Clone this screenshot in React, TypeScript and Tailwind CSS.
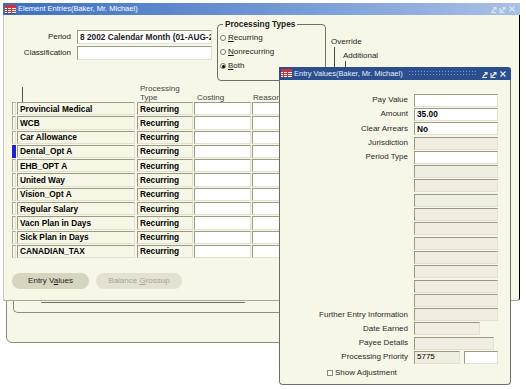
import React from "react";

const rows = [
  "Provincial Medical",
  "WCB",
  "Car Allowance",
  "Dental_Opt A",
  "EHB_OPT A",
  "United Way",
  "Vision_Opt A",
  "Regular Salary",
  "Vacn Plan in Days",
  "Sick Plan in Days",
  "CANADIAN_TAX",
];

const entryRows = [
  { label: "Pay Value", white: true },
  { label: "Amount", white: true, value: "35.00" },
  { label: "Clear Arrears", white: true, value: "No" },
  { label: "Jurisdiction" },
  { label: "Period Type", white: true },
  { label: "" },
  { label: "" },
  { label: "" },
  { label: "" },
  { label: "" },
  { label: "" },
  { label: "" },
  { label: "" },
  { label: "" },
  { label: "" },
  { label: "Further Entry Information" },
];

const FormIcon = () => (
  <svg width="11" height="9" viewBox="0 0 11 9" className="shrink-0">
    <rect width="11" height="9" fill="#fff" />
    <rect x="0" y="0" width="11" height="3" fill="#c9353a" />
    <rect x="0" y="4" width="11" height="1" fill="#c9353a" />
    <rect x="0" y="6" width="11" height="1" fill="#c9353a" />
    <rect x="2" y="3" width="1" height="6" fill="#c9353a" />
    <rect x="6" y="3" width="1" height="6" fill="#c9353a" />
    <rect x="0" y="8" width="11" height="1" fill="#3d4f86" />
  </svg>
);

const WinControls = ({ color }: { color: string }) => (
  <svg width="26" height="8" viewBox="0 0 26 8" fill="none" stroke={color} strokeWidth="1.1">
    <path d="M1 7.5h5M2 6.5l4-4M3.5 2.5h2.5v2.5" />
    <path d="M10 3v4.5h4.5M11 6.5l4-4M12.5 2.5h2.5v2.5" />
    <path d="M19.5 1.5l5 5M24.5 1.5l-5 5" />
  </svg>
);

const Field = ({
  className,
  white,
  children,
}: {
  className: string;
  white?: boolean;
  children?: React.ReactNode;
}) => (
  <div
    className={`${className} ${
      white ? "bg-white" : "bg-[#efeee0]"
    } border border-t-[#9b9a84] border-l-[#9b9a84] border-b-[#e2e1d0] border-r-[#e2e1d0] flex items-center px-[2px] overflow-hidden whitespace-nowrap`}
  >
    {children}
  </div>
);

const Radio = ({ checked, letter, rest }: { checked?: boolean; letter: string; rest: string }) => (
  <div className="flex items-center h-[14px] gap-[2px]">
    <span className="w-[6px] h-[6px] rounded-full border border-[#7a7a6c] bg-white flex items-center justify-center">
      {checked && <span className="w-[3px] h-[3px] rounded-full bg-black" />}
    </span>
    <span>
      <span className="underline">{letter}</span>
      {rest}
    </span>
  </div>
);

export default function App() {
  return (
    <div className="relative w-[526px] h-[389px] bg-white overflow-hidden font-['Liberation_Sans',Arial,sans-serif] text-[8px] text-[#1c1c1c] leading-none">
      {/* window behind */}
      <div className="absolute left-[6px] top-[270px] w-[470px] h-[73px] bg-[#f7f7e7] border border-[#8d8d7c] rounded-b-[6px]" />
      <div className="absolute left-[13px] top-[280px] w-[460px] h-[33px] border-l border-b border-[#8d8d7c] rounded-bl-[5px]" />
      <div className="absolute left-[41px] top-[302px] w-[204px] h-[1px] bg-[#6f6f62]" />

      {/* Element Entries window */}
      <div className="absolute left-[3px] top-[3px] w-[517px] h-[298px] flex flex-col">
        <div className="h-[12px] flex items-center gap-[2px] pl-[2px] pr-[4px] bg-gradient-to-r from-[#3c6fc2] via-[#6e95d3] to-[#a9c1e6] text-white text-[7.5px]">
          <FormIcon />
          <span className="flex-1">Element Entries(Baker, Mr. Michael)</span>
          <WinControls color="#dfe6f2" />
        </div>
        <div className="flex-1 bg-[#f7f7e7] border-l border-l-[#c8c8b6] border-r border-r-black border-b border-b-[#a9a998] rounded-br-[3px] flex flex-col">
          {/* header form */}
          <div className="flex pt-[9px] h-[66px]">
            <div className="w-[208px] pt-[6px] flex flex-col gap-[2px]">
              <div className="flex items-center h-[14px]">
                <span className="w-[67px] text-right">Period</span>
                <Field className="ml-[6px] w-[135px] h-[14px]" white>
                  <span className="font-bold text-[8.3px]">8 2002 Calendar Month (01-AUG-2002)</span>
                </Field>
              </div>
              <div className="flex items-center h-[14px]">
                <span className="w-[67px] text-right">Classification</span>
                <Field className="ml-[6px] w-[135px] h-[14px]" white />
              </div>
            </div>
            <div className="relative ml-[5px] w-[109px] h-[57px] border border-[#707064] rounded-[4px] pt-[6px] pl-[2px]">
              <span className="absolute -top-[5px] left-[5px] bg-[#f7f7e7] px-[2px] font-bold text-[8.3px]">
                Processing Types
              </span>
              <Radio letter="R" rest="ecurring" />
              <Radio letter="N" rest="onrecurring" />
              <Radio letter="B" rest="oth" checked />
            </div>
            <div className="ml-[5px] flex flex-col pt-[14px]">
              <span className="h-[9px]">Override</span>
              <div className="flex">
                <span className="w-px h-[24px] ml-[3px] bg-[#4a4a40]" />
                <div className="flex flex-col ml-[8px] pt-[5px]">
                  <span className="h-[9px]">Additional</span>
                  <span className="w-px h-[10px] ml-[2px] bg-[#4a4a40]" />
                </div>
              </div>
            </div>
          </div>

          {/* table header */}
          <div className="flex items-end h-[21px] pl-[8px]">
            <span className="w-[4px] mr-[1px]" />
            <div className="w-[118px] mr-[2px] flex items-end">
              <span className="ml-[5px] w-px h-[15px] bg-[#55554a]" />
            </div>
            <div className="w-[56px] mr-[1px] pl-[3px] text-[#444] leading-[9px]">
              <div>Processing</div>
              <div>Type</div>
            </div>
            <div className="w-[57px] mr-[1px] pl-[3px] text-[#444] leading-[9px]">Costing</div>
            <div className="w-[60px] pl-[1px] text-[#444] leading-[9px]">Reason</div>
          </div>

          {/* rows */}
          <div className="flex flex-col gap-[1px] pl-[8px]">
            {rows.map((name, i) => (
              <div key={name} className="flex h-[13.3px]">
                <span
                  className={`w-[4px] mr-[1px] ${
                    i === 3 ? "bg-[#1f1fd0]" : "border border-t-[#a9a894] border-l-[#a9a894] border-b-[#e2e1d0] border-r-[#e2e1d0]"
                  }`}
                />
                <Field className="w-[118px] mr-[2px] h-full bg-[#f7f7e7]!">
                  <span className="font-bold text-[8.3px] text-black">{name}</span>
                </Field>
                <Field className="w-[56px] mr-[1px] h-full bg-[#f7f7e7]!">
                  <span className="font-bold text-[8.3px] text-black">Recurring</span>
                </Field>
                <Field className="w-[57px] mr-[1px] h-full" white />
                <Field className="w-[60px] h-full" white />
              </div>
            ))}
          </div>

          {/* buttons */}
          <div className="flex gap-[7px] pl-[8px] mt-[15px]">
            <button className="w-[77px] h-[16px] rounded-full bg-[#d6d5c0] text-[8px] text-[#1c1c1c]">
              Entry V<span className="underline">a</span>lues
            </button>
            <button className="w-[86px] h-[16px] rounded-full bg-[#e3e2d0] text-[8px] text-[#a6a698]">
              Balance <span className="underline">G</span>rossup
            </button>
          </div>
        </div>
      </div>

      {/* Entry Values window */}
      <div className="absolute left-[279px] top-[67px] w-[232px] h-[318px] flex flex-col">
        <div className="h-[13px] flex items-center gap-[2px] pl-[2px] pr-[4px] bg-[#2b4f8e] rounded-tr-[3px] text-white text-[7.5px]">
          <FormIcon />
          <span className="text-[#e8eef8]">Entry Values(Baker, Mr. Michael)</span>
          <span className="flex-1 h-[7px] mx-[3px] bg-[radial-gradient(circle,#8399c2_0.7px,transparent_0.9px)] bg-[length:3px_3px]" />
          <WinControls color="#e6ecf6" />
        </div>
        <div className="flex-1 bg-[#f7f7e7] border-l border-r border-b border-[#6e6e62] rounded-b-[4px] pt-[13px] flex flex-col">
          {entryRows.map((r, i) => (
            <div key={i} className="flex items-center h-[14.3px]">
              <span className="w-[128px] text-right text-[#2a2a2a]">{r.label}</span>
              <Field className="ml-[6px] w-[84px] h-[13px]" white={r.white}>
                {r.value && <span className="font-bold text-[8.3px] text-black">{r.value}</span>}
              </Field>
            </div>
          ))}
          <div className="flex items-center h-[14.3px]">
            <span className="w-[128px] text-right text-[#2a2a2a]">Date Earned</span>
            <Field className="ml-[6px] w-[66px] h-[13px]" />
          </div>
          <div className="flex items-center h-[14.3px]">
            <span className="w-[128px] text-right text-[#2a2a2a]">Payee Details</span>
            <Field className="ml-[6px] w-[80px] h-[13px]" />
          </div>
          <div className="flex items-center h-[14.3px]">
            <span className="w-[128px] text-right text-[#2a2a2a]">Processing Priority</span>
            <Field className="ml-[6px] w-[46px] h-[13px]">
              <span className="text-[8px] text-black">5775</span>
            </Field>
            <Field className="ml-[4px] w-[34px] h-[13px]" white />
          </div>
          <div className="flex items-center gap-[2px] pl-[47px] mt-[4px] text-[#2a2a2a]">
            <span className="w-[6px] h-[6px] border border-[#8a8a7c] bg-[#fbfbf3]" />
            <span>Show Adjustment</span>
          </div>
        </div>
      </div>
    </div>
  );
}
